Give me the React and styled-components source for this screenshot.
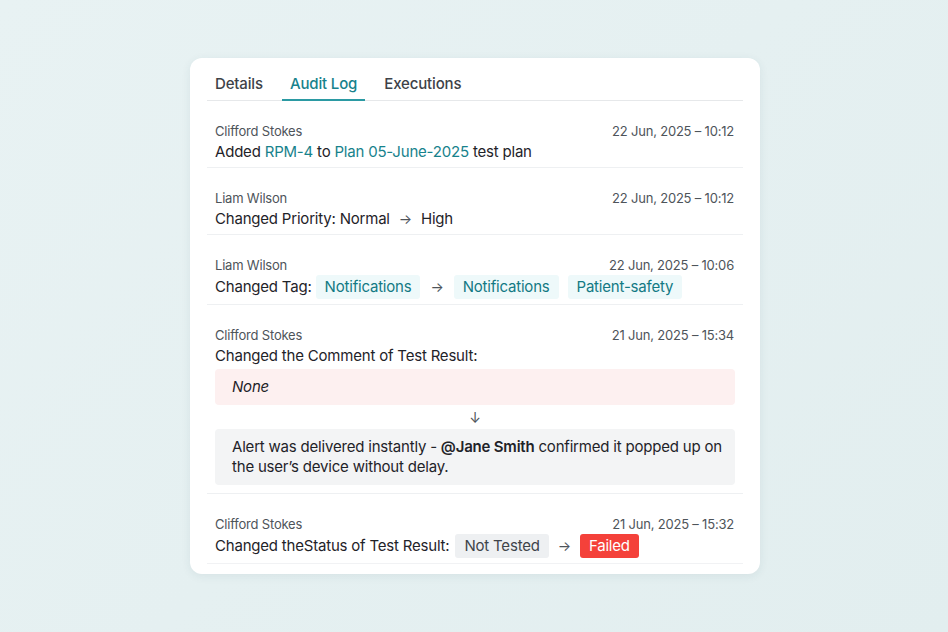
import React from "react";
import styled, { createGlobalStyle } from "styled-components";

const Global = createGlobalStyle`
  html, body { margin: 0; padding: 0; }
  body {
    background: #e5f0f1;
    font-family: Inter, "Noto Sans", sans-serif;
    color: #1f2329;
    -webkit-font-smoothing: antialiased;
  }
  #root { min-height: 632px; }
`;

const Page = styled.div`
  width: 948px;
  height: 632px;
  box-sizing: border-box;
  display: flex;
  justify-content: center;
  padding: 58px 0 0 2px;
  background: linear-gradient(135deg, #e8f2f3 0%, #e2eeef 100%);
`;

const Card = styled.div`
  width: 570px;
  height: 516px;
  box-sizing: border-box;
  background: #fff;
  border-radius: 12px;
  box-shadow: 0 2px 10px rgba(40, 80, 90, 0.08);
  padding: 0 17px;
  display: flex;
  flex-direction: column;
`;

const Tabs = styled.div`
  display: flex;
  gap: 11px;
  border-bottom: 1px solid #e6e8ea;
  padding-top: 12px;
`;

const Tab = styled.div`
  padding: 3px 8px 5px;
  font-size: 15px;
  line-height: 21px;
  font-weight: 500;
  letter-spacing: -0.15px;
  color: ${(p) => (p.$active ? "#17828c" : "#3d4248")};
  border-bottom: 2px solid ${(p) => (p.$active ? "#2b9aa3" : "transparent")};
  margin-bottom: -1px;
`;

const Row = styled.div`
  padding: 21px 8px 5px;
  border-bottom: ${(p) => (p.$last ? "1px solid #f1f2f4" : "1px solid #eef0f2")};
  display: flex;
  flex-direction: column;
`;

const Meta = styled.div`
  display: flex;
  justify-content: space-between;
  font-size: 13px;
  line-height: 18px;
  letter-spacing: -0.2px;
  color: #4e545a;
  padding-right: 1px;
`;

const Line = styled.div`
  display: flex;
  align-items: center;
  font-size: 15px;
  line-height: 20px;
  letter-spacing: -0.2px;
  color: #1f2329;
  min-height: ${(p) => (p.$tall ? "24px" : "20px")};
  margin-top: ${(p) => (p.$tall ? "1px" : "2px")};
  white-space: pre;
`;

const Link = styled.span`
  color: #17828c;
`;

const Arrow = styled.span`
  color: #4e545a;
  font-size: 14px;
  margin: 0 ${(p) => p.$gap || 12}px;
`;

const Tag = styled.span`
  background: #eef9fa;
  color: #137a84;
  border-radius: 3px;
  padding: 2px 9px;
  line-height: 20px;
  font-size: 15px;
  margin-left: ${(p) => p.$ml || 0}px;
`;

const Badge = styled.span`
  background: ${(p) => (p.$tone === "red" ? "#f4413a" : "#eef0f2")};
  color: ${(p) => (p.$tone === "red" ? "#fff" : "#3f444a")};
  border-radius: 3px;
  padding: 2px 9px;
  line-height: 20px;
  font-size: 15px;
  margin-left: ${(p) => p.$ml || 0}px;
`;

const Box = styled.div`
  margin-top: ${(p) => p.$mt || 0}px;
  background: ${(p) => (p.$tone === "pink" ? "#fdf0f0" : "#f3f4f5")};
  border-radius: 4px;
  padding: 8px 12px 8px 17px;
  min-height: 20px;
  font-size: 15px;
  line-height: 20px;
  letter-spacing: -0.2px;
  color: #1f2329;
  font-style: ${(p) => (p.$italic ? "italic" : "normal")};
`;

const DownArrow = styled.div`
  height: 24px;
  display: flex;
  align-items: center;
  justify-content: center;
  font-size: 14px;
  color: #4e545a;
`;

const Strong = styled.span`
  font-weight: 600;
`;

const BottomSpace = styled.div`
  height: 3px;
`;

export default function App() {
  return (
    <>
      <Global />
      <Page>
        <Card>
          <Tabs>
            <Tab>Details</Tab>
            <Tab $active>Audit Log</Tab>
            <Tab>Executions</Tab>
          </Tabs>

          <Row>
            <Meta>
              <span>Clifford Stokes</span>
              <span>22 Jun, 2025 – 10:12</span>
            </Meta>
            <Line>
              Added <Link>RPM-4</Link> to <Link>Plan 05-June-2025</Link> test plan
            </Line>
          </Row>

          <Row>
            <Meta>
              <span>Liam Wilson</span>
              <span>22 Jun, 2025 – 10:12</span>
            </Meta>
            <Line>
              Changed Priority: Normal<Arrow $gap={9}>→</Arrow>High
            </Line>
          </Row>

          <Row>
            <Meta>
              <span>Liam Wilson</span>
              <span>22 Jun, 2025 – 10:06</span>
            </Meta>
            <Line $tall>
              Changed Tag:<Tag $ml={4}>Notifications</Tag>
              <Arrow $gap={10}>→</Arrow>
              <Tag>Notifications</Tag>
              <Tag $ml={9}>Patient-safety</Tag>
            </Line>
          </Row>

          <Row>
            <Meta>
              <span>Clifford Stokes</span>
              <span>21 Jun, 2025 – 15:34</span>
            </Meta>
            <Line>Changed the Comment of Test Result:</Line>
            <Box $tone="pink" $italic $mt={3}>None</Box>
            <DownArrow>↓</DownArrow>
            <Box>
              Alert was delivered instantly - <Strong>@Jane Smith</Strong> confirmed it popped up on
              the user’s device without delay.
            </Box>
            <BottomSpace />
          </Row>

          <Row $last>
            <Meta>
              <span>Clifford Stokes</span>
              <span>21 Jun, 2025 – 15:32</span>
            </Meta>
            <Line $tall>
              Changed theStatus of Test Result:<Badge $ml={6}>Not Tested</Badge>
              <Arrow $gap={9}>→</Arrow>
              <Badge $tone="red">Failed</Badge>
            </Line>
          </Row>
        </Card>
      </Page>
    </>
  );
}
